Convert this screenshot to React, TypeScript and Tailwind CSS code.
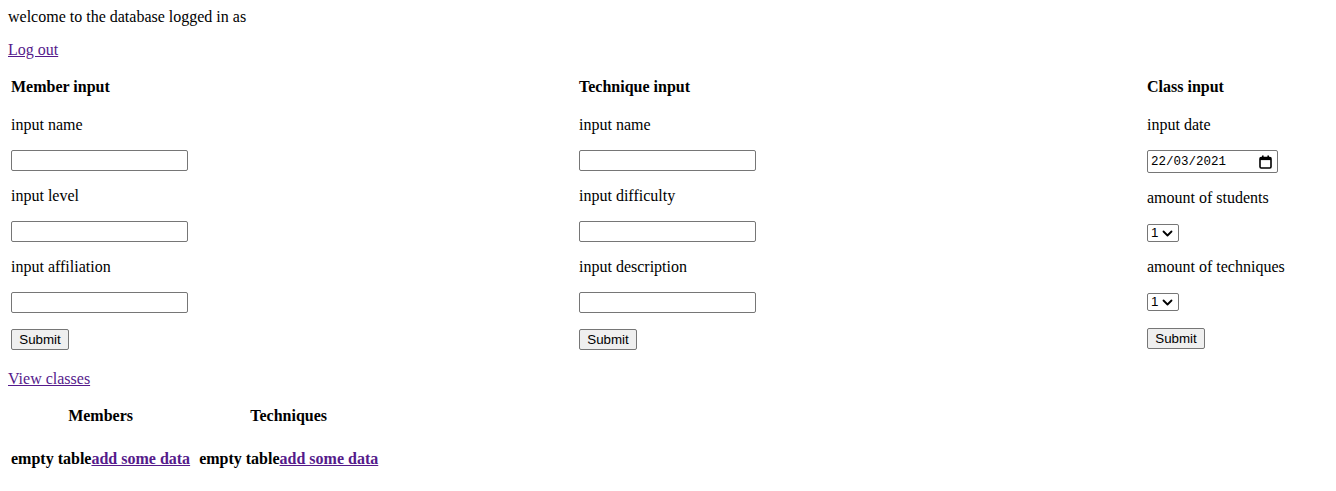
import React from 'react';

const linkClass = 'text-[#551a8b] underline';
const uiFont = "font-['Liberation_Sans',Arial,sans-serif]";

function Label({ children, className = 'mt-4' }: { children: React.ReactNode; className?: string }) {
  return <p className={className}>{children}</p>;
}

function TextField() {
  return (
    <input
      type="text"
      className={`mt-4 block h-[21px] w-[177px] rounded-[2px] border border-[#767676] bg-white px-[2px] text-[13.33px] ${uiFont}`}
    />
  );
}

function SubmitButton({ className = 'mt-4' }: { className?: string }) {
  return (
    <button
      type="button"
      className={`${className} flex h-[21px] w-[58px] items-center justify-center rounded-[2px] border border-[#767676] bg-[#efefef] text-[13.33px] leading-none text-black ${uiFont}`}
    >
      Submit
    </button>
  );
}

function DateField() {
  return (
    <div className="mt-4 flex h-[23px] w-[131px] items-center justify-between rounded-[2px] border border-[#767676] bg-white pl-[3px] pr-[5px]">
      <span className="pt-[1px] font-['Liberation_Mono',monospace] text-[12.5px] leading-none text-black">
        22/03/2021
      </span>
      <svg width="13" height="14" viewBox="0 0 13 14" fill="none">
        <rect x="1" y="2.5" width="11" height="10.5" rx="1.2" stroke="#000" strokeWidth="1.6" />
        <rect x="1" y="2.5" width="11" height="2.6" fill="#000" />
        <rect x="3" y="0.5" width="1.6" height="2.5" fill="#000" />
        <rect x="8.4" y="0.5" width="1.6" height="2.5" fill="#000" />
      </svg>
    </div>
  );
}

function SelectBox() {
  return (
    <div
      className={`mt-[17px] flex h-[18px] w-[32px] items-center gap-[4px] rounded-[2px] border border-[#767676] bg-white pl-[3px] text-[13.33px] leading-none text-black ${uiFont}`}
    >
      <span>1</span>
      <svg width="11" height="7" viewBox="0 0 11 7" fill="none">
        <path d="M1.5 1.5l4 4 4-4" stroke="#000" strokeWidth="1.8" strokeLinecap="round" strokeLinejoin="round" />
      </svg>
    </div>
  );
}

export default function App() {
  return (
    <div className="min-h-screen bg-white px-2 pt-2 font-['Liberation_Serif','Times_New_Roman',serif] text-[16px] leading-[18px] text-black">
      <div>welcome to the database logged in as</div>
      <p className="mt-[15px]">
        <a href="#" className={linkClass}>
          Log out
        </a>
      </p>

      <div className="mt-4 grid grid-cols-[568px_568px_1fr] items-start pb-[3px] pl-[3px] pt-[3px]">
        <div>
          <div className="font-bold">Member input</div>
          <Label className="mt-[20px]">input name</Label>
          <TextField />
          <Label>input level</Label>
          <TextField />
          <Label>input affiliation</Label>
          <TextField />
          <SubmitButton />
        </div>

        <div>
          <div className="font-bold">Technique input</div>
          <Label className="mt-[20px]">input name</Label>
          <TextField />
          <Label>input difficulty</Label>
          <TextField />
          <Label>input description</Label>
          <TextField />
          <SubmitButton />
        </div>

        <div>
          <div className="font-bold">Class input</div>
          <Label className="mt-[20px]">input date</Label>
          <DateField />
          <Label>amount of students</Label>
          <SelectBox />
          <Label>amount of techniques</Label>
          <SelectBox />
          <SubmitButton className="mt-[17px]" />
        </div>
      </div>

      <p className="mt-[17px]">
        <a href="#" className={linkClass}>
          View classes
        </a>
      </p>

      <div className="mt-[19px] grid w-max grid-cols-[auto_auto] gap-x-[9px] pl-[3px]">
        <div className="text-center font-bold">Members</div>
        <div className="text-center font-bold">Techniques</div>
        <div className="mt-[25px] font-bold">
          empty table
          <a href="#" className={linkClass}>
            add some data
          </a>
        </div>
        <div className="mt-[25px] font-bold">
          empty table
          <a href="#" className={linkClass}>
            add some data
          </a>
        </div>
      </div>
    </div>
  );
}
